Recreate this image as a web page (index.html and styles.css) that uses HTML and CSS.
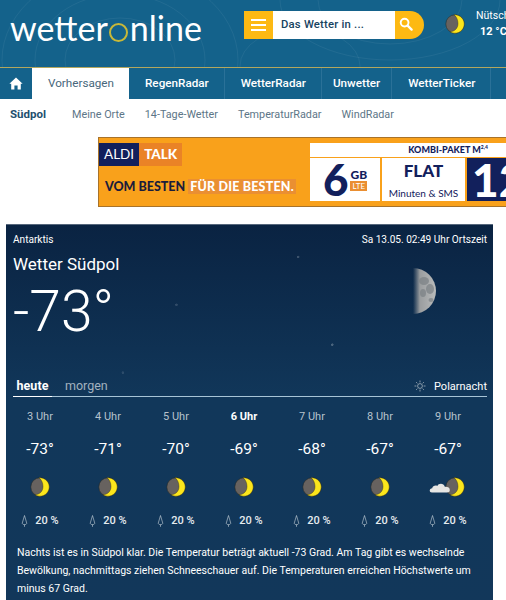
FILE: index.html
```html
<!DOCTYPE html>
<html lang="de">
<head>
    <meta charset="UTF-8">
    <meta name="viewport" content="width=device-width, initial-scale=1.0">
    <title>Wetter Südpol</title>
    <link rel="stylesheet" href="styles.css">
</head>
<body>
    <svg class="icon-defs" width="0" height="0">
        <defs>
            <symbol id="moon" viewBox="0 0 20 20">
                <circle cx="10" cy="10" r="9.2" fill="#67625f" stroke="#2b2a20" stroke-width="0.5"/>
                <path d="M9 .85 A9.2 9.2 0 1 1 5 17.7 C10 17.5 13 14 13 9.5 C13 6 11.5 2.5 9 .85Z" fill="#fce61c" stroke="#3a3510" stroke-width="0.4"/>
            </symbol>
            <symbol id="drop" viewBox="0 0 8 14">
                <path d="M4 .6 L1.4 9.4 C1.2 10.6 2.6 11.2 4 11.2 C5.4 11.2 6.8 10.6 6.6 9.4Z M4 11.2 V13.8" fill="none" stroke="#cfd8df" stroke-width="0.7"/>
            </symbol>
        </defs>
    </svg>

    <header class="top">
        <svg class="contours" viewBox="0 0 506 67" width="506" height="67">
            <g fill="none" stroke="#fff" stroke-opacity="0.06">
                <ellipse cx="120" cy="60" rx="55" ry="42"/>
                <ellipse cx="120" cy="60" rx="85" ry="66"/>
                <ellipse cx="120" cy="60" rx="118" ry="92"/>
                <ellipse cx="300" cy="66" rx="60" ry="38"/>
                <ellipse cx="390" cy="0" rx="72" ry="44"/>
                <ellipse cx="390" cy="0" rx="110" ry="60"/>
            </g>
        </svg>
        <a class="logo">wetter<span class="logo-o"></span>nline</a>
        <div class="search">
            <button class="menu-btn">
                <span></span><span></span><span></span>
            </button>
            <div class="search-input">Das Wetter in ...</div>
            <button class="search-btn">
                <svg width="14" height="14" viewBox="0 0 14 14"><circle cx="5.6" cy="5.6" r="3.9" fill="none" stroke="#fff" stroke-width="1.9"/><path d="M8.6 8.6 L12.6 12.6" stroke="#fff" stroke-width="2.3" stroke-linecap="round"/></svg>
            </button>
        </div>
        <svg class="top-moon" width="20" height="20"><use href="#moon"/></svg>
        <div class="top-place">
            <div>Nütschau</div>
            <div class="top-temp">12 °C</div>
        </div>
    </header>

    <nav class="main-nav">
        <a class="home-tab">
            <svg width="14" height="13" viewBox="0 0 14 13"><path d="M7 .6 L13.6 6.8 L11.8 6.8 L11.8 12.6 L8.6 12.6 L8.6 8.6 L5.4 8.6 L5.4 12.6 L2.2 12.6 L2.2 6.8 L.4 6.8Z" fill="#fff"/></svg>
        </a>
        <a class="tab active">Vorhersagen</a>
        <a class="tab">RegenRadar</a>
        <a class="tab">WetterRadar</a>
        <a class="tab tab-narrow">Unwetter</a>
        <a class="tab">WetterTicker</a>
        <a class="tab">Wetter</a>
    </nav>

    <nav class="sub-nav">
        <a class="current">Südpol</a>
        <a>Meine Orte</a>
        <a>14-Tage-Wetter</a>
        <a>TemperaturRadar</a>
        <a>WindRadar</a>
    </nav>

    <div class="ad">
        <div class="ad-left">
            <div class="ad-logo"><span class="ad-aldi">ALDI</span><span class="ad-talk">TALK</span></div>
            <div class="ad-claim">VOM BESTEN <span>FÜR DIE BESTEN.</span></div>
        </div>
        <div class="ad-right">
            <div class="ad-title">KOMBI-PAKET M<sup>2,4</sup></div>
            <div class="ad-boxes">
                <div class="ad-box ad-gb">
                    <span class="ad-six">6</span>
                    <span class="ad-gb-col"><b>GB</b><i>LTE</i></span>
                </div>
                <div class="ad-box ad-flat">
                    <b>FLAT</b>
                    <span>Minuten &amp; SMS</span>
                </div>
                <div class="ad-box ad-price">12</div>
            </div>
        </div>
    </div>

    <main class="card">
        <svg class="big-moon" width="30" height="48" viewBox="0 0 30 48">
            <defs>
                <linearGradient id="lit" x1="0" x2="1" y1="0" y2="0">
                    <stop offset="0" stop-color="#8d9296" stop-opacity="0"/>
                    <stop offset="0.3" stop-color="#9a9d9f"/>
                    <stop offset="1" stop-color="#b9bbbb"/>
                </linearGradient>
            </defs>
            <path d="M2 1 A23 23 0 0 1 2 47Z" fill="url(#lit)"/>
            <g fill="#7b8084" fill-opacity="0.7">
                <ellipse cx="13" cy="14" rx="5" ry="4"/>
                <ellipse cx="19" cy="22" rx="4" ry="5"/>
                <ellipse cx="12" cy="26" rx="3" ry="4"/>
                <ellipse cx="20" cy="33" rx="2.5" ry="2"/>
            </g>
        </svg>

        <div class="card-top">
            <span>Antarktis</span>
            <span>Sa 13.05. 02:49 Uhr Ortszeit</span>
        </div>
        <h1>Wetter Südpol</h1>
        <div class="now-temp">-73°</div>

        <div class="day-tabs">
            <a class="day active">heute</a>
            <a class="day">morgen</a>
            <span class="polar">
                <svg width="12" height="12" viewBox="0 0 12 12"><circle cx="6" cy="6" r="2.4" fill="none" stroke="#b9c3ca" stroke-width="0.7"/><path d="M6 .5V2.4M6 9.6V11.5M.5 6H2.4M9.6 6H11.5M2.1 2.1L3.4 3.4M8.6 8.6L9.9 9.9M2.1 9.9L3.4 8.6M8.6 3.4L9.9 2.1" stroke="#b9c3ca" stroke-width="0.7"/></svg>
                Polarnacht
            </span>
        </div>

        <div class="hours">
            <div class="hour"><div class="h-time">3 Uhr</div><div class="h-temp">-73°</div><svg class="h-icon" width="20" height="20"><use href="#moon"/></svg><div class="h-rain"><svg width="7" height="12"><use href="#drop"/></svg>20 %</div></div>
            <div class="hour"><div class="h-time">4 Uhr</div><div class="h-temp">-71°</div><svg class="h-icon" width="20" height="20"><use href="#moon"/></svg><div class="h-rain"><svg width="7" height="12"><use href="#drop"/></svg>20 %</div></div>
            <div class="hour"><div class="h-time">5 Uhr</div><div class="h-temp">-70°</div><svg class="h-icon" width="20" height="20"><use href="#moon"/></svg><div class="h-rain"><svg width="7" height="12"><use href="#drop"/></svg>20 %</div></div>
            <div class="hour"><div class="h-time now">6 Uhr</div><div class="h-temp">-69°</div><svg class="h-icon" width="20" height="20"><use href="#moon"/></svg><div class="h-rain"><svg width="7" height="12"><use href="#drop"/></svg>20 %</div></div>
            <div class="hour"><div class="h-time">7 Uhr</div><div class="h-temp">-68°</div><svg class="h-icon" width="20" height="20"><use href="#moon"/></svg><div class="h-rain"><svg width="7" height="12"><use href="#drop"/></svg>20 %</div></div>
            <div class="hour"><div class="h-time">8 Uhr</div><div class="h-temp">-67°</div><svg class="h-icon" width="20" height="20"><use href="#moon"/></svg><div class="h-rain"><svg width="7" height="12"><use href="#drop"/></svg>20 %</div></div>
            <div class="hour">
                <div class="h-time">9 Uhr</div>
                <div class="h-temp">-67°</div>
                <svg class="h-icon" width="36" height="20" viewBox="0 0 36 20">
                    <use href="#moon" x="16" y="0" width="20" height="20"/>
                    <path d="M3 15.5 C0 15.5 0 11.3 3.2 11.2 C3.6 8.6 6.8 8 8.3 9 C9.6 5.8 15 6 15.8 9.8 C18.8 9.6 20.8 10.8 20.8 13 C20.8 14.8 19.6 15.5 18 15.5Z" fill="#e6e6e4"/>
                </svg>
                <div class="h-rain"><svg width="7" height="12"><use href="#drop"/></svg>20 %</div>
            </div>
        </div>

        <p class="summary">Nachts ist es in Südpol klar. Die Temperatur beträgt aktuell -73 Grad. Am Tag gibt es wechselnde Bewölkung, nachmittags ziehen Schneeschauer auf. Die Temperaturen erreichen Höchstwerte um minus 67 Grad.</p>
    </main>
</body>
</html>
```

FILE: styles.css
```css
html, body {
    margin: 0;
    overflow: hidden;
    height: 600px;
}

body {
    background: #fff;
    font-family: Roboto, Arial, sans-serif;
    width: 506px;
}

a {
    text-decoration: none;
}

.icon-defs {
    display: block;
    height: 0;
}

/* Header */
.top {
    position: relative;
    height: 67px;
    background: #14628b;
    display: flex;
    white-space: nowrap;
    overflow: hidden;
    border-bottom: 1px solid #b3a75e;
}

.contours {
    position: absolute;
    left: 0;
    top: 0;
}

.logo {
    position: relative;
    flex: none;
    margin: 5px 0 0 10px;
    width: 234px;
    font-family: Lato, sans-serif;
    font-weight: 400;
    font-size: 34px;
    line-height: 46px;
    color: #fff;
}

.logo-o {
    display: inline-block;
    width: 15px;
    height: 15px;
    margin: 0 1.5px;
    border: 2px solid #c8b838;
    border-radius: 50%;
    vertical-align: -1px;
}

.search {
    position: relative;
    flex: none;
    display: flex;
    margin-top: 11px;
    height: 28px;
    width: 180px;
}

.menu-btn {
    width: 29px;
    background: #fdb913;
    border: none;
    padding: 0 7px;
    display: flex;
    flex-direction: column;
    justify-content: center;
    gap: 3px;
}

.menu-btn span {
    display: block;
    height: 2px;
    background: #fff;
}

.search-input {
    width: 122px;
    background: #fff;
    color: #17435f;
    font-size: 11.3px;
    font-weight: 500;
    line-height: 28px;
    padding-left: 8px;
    box-sizing: border-box;
    letter-spacing: 0.2px;
}

.search-btn {
    width: 29px;
    background: #fdb913;
    border: none;
    border-radius: 0 14px 14px 0;
    padding: 0 0 0 4px;
    text-align: left;
}

.top-moon {
    position: relative;
    flex: none;
    margin: 14px 0 0 21px;
}

.top-place {
    position: relative;
    margin: 8px 0 0 11px;
    color: #fff;
    font-size: 10.5px;
    line-height: 16px;
}

.top-temp {
    margin-left: 4px;
    font-weight: 700;
    font-size: 11px;
}

/* Navigation */
.main-nav {
    display: flex;
    height: 31px;
    background: #14628b;
    white-space: nowrap;
    overflow: hidden;
}

.home-tab {
    width: 32px;
    flex: none;
    display: flex;
    align-items: center;
    justify-content: center;
}

.tab {
    flex: none;
    padding: 0 15px 0 16px;
    color: #fff;
    font-size: 11.7px;
    font-weight: 500;
    line-height: 31px;
    border-right: 1px solid #2a7198;
}

.tab-narrow {
    padding: 0 11px;
}

.tab.active {
    background: #fff;
    color: #48677b;
    font-weight: 400;
    border-right: none;
}

.sub-nav {
    display: flex;
    gap: 20px;
    height: 30px;
    padding-left: 10px;
    align-items: center;
    font-size: 10.8px;
    color: #5d7687;
    white-space: nowrap;
}

.sub-nav .current {
    margin-right: 6px;
    color: #1e4f6e;
    font-weight: 700;
    font-size: 11.5px;
}

/* Werbung */
.ad {
    display: flex;
    margin: 8px 0 0 98px;
    height: 70px;
    width: 500px;
    box-sizing: border-box;
    background: #f9a11b;
    border: 1px solid #a8732a;
    overflow: hidden;
    font-family: Lato, sans-serif;
}

.ad-left {
    width: 211px;
    flex: none;
    padding-top: 5px;
}

.ad-logo {
    display: flex;
    height: 23px;
    line-height: 23px;
    color: #fff;
    font-size: 13.5px;
}

.ad-aldi {
    background: #12205c;
    padding: 0 5px;
    font-family: "Liberation Sans Narrow", Lato, sans-serif;
}

.ad-talk {
    background: #ea8326;
    padding: 0 5px;
    font-weight: 900;
}

.ad-claim {
    margin: 13px 0 0 6px;
    color: #1b1c3b;
    font-weight: 900;
    font-size: 12.5px;
    line-height: 15px;
}

.ad-claim span {
    background: #ea8f32;
    color: #fff;
    padding: 0 2px;
    letter-spacing: 0.2px;
}

.ad-right {
    flex: 1;
    padding-top: 5px;
}

.ad-title {
    background: #fff;
    height: 14px;
    line-height: 14px;
    text-align: center;
    font-size: 9px;
    font-weight: 900;
    color: #12205c;
    margin-bottom: 1px;
    width: 276px;
}

.ad-title sup {
    font-size: 5px;
    line-height: 0;
}

.ad-boxes {
    display: flex;
    gap: 2px;
    height: 43px;
}

.ad-box {
    background: #fff;
    color: #12205c;
}

.ad-gb {
    width: 70px;
    display: flex;
    justify-content: center;
    align-items: center;
    gap: 2px;
}

.ad-six {
    font-size: 44px;
    font-weight: 900;
    line-height: 43px;
}

.ad-gb-col {
    display: flex;
    flex-direction: column;
    font-size: 12px;
    line-height: 13px;
    font-weight: 900;
}

.ad-gb-col i {
    background: #ea8f32;
    color: #fff;
    font-style: normal;
    font-size: 8px;
    font-weight: 400;
    line-height: 10px;
    text-align: center;
}

.ad-flat {
    width: 83px;
    text-align: center;
    padding-top: 3px;
    box-sizing: border-box;
}

.ad-flat b {
    display: block;
    font-size: 17px;
    font-weight: 900;
    line-height: 20px;
}

.ad-flat span {
    font-size: 10px;
    line-height: 12px;
}

.ad-price {
    width: 50px;
    background: #12205c;
    color: #fff;
    font-size: 46px;
    font-weight: 900;
    line-height: 43px;
    padding-left: 5px;
}

/* Wetterkarte */
.card {
    position: relative;
    margin: 17px 0 0 6px;
    width: 487px;
    height: 400px;
    box-sizing: border-box;
    padding: 8px 6px 0 7px;
    color: #fff;
    border-top: 1px solid #56677c;
    background-color: #12365a;
    background-image:
        radial-gradient(circle at 60% 8%, rgba(255,255,255,.2) 0 1px, transparent 1.5px),
        radial-gradient(circle at 35% 20%, rgba(255,255,255,.15) 0 1px, transparent 1.5px),
        radial-gradient(circle at 67% 30%, rgba(255,255,255,.25) 0 1px, transparent 1.5px),
        radial-gradient(circle at 24% 37%, rgba(255,255,255,.12) 0 1px, transparent 1.5px),
        linear-gradient(180deg, #0a2342 0, #11375a 175px, #12375a 100%);
}

.big-moon {
    position: absolute;
    left: 405px;
    top: 42px;
}

.card-top {
    display: flex;
    justify-content: space-between;
    font-size: 10.1px;
    line-height: 13px;
}

h1 {
    margin: 6px 0 0;
    font-size: 17px;
    font-weight: 400;
    line-height: 24px;
}

.now-temp {
    margin-top: 5px;
    font-size: 57px;
    font-weight: 300;
    line-height: 62px;
}

.day-tabs {
    display: flex;
    align-items: flex-end;
    gap: 13px;
    margin-top: 26px;
    height: 27px;
    border-bottom: 1px solid #a7c4d6;
    font-size: 12.5px;
}

.day {
    display: block;
    color: #a3b2bf;
    line-height: 20px;
    height: 20px;
}

.day.active {
    color: #fff;
    font-weight: 700;
    width: 39px;
    text-align: center;
    border-bottom: 1px solid #fff;
    margin-bottom: -1px;
    letter-spacing: 0.1px;
}

.polar {
    margin-left: auto;
    display: flex;
    align-items: center;
    gap: 8px;
    height: 20px;
    font-size: 11px;
    color: #fff;
}

.hours {
    display: grid;
    grid-template-columns: repeat(7, 68px);
    margin-left: -7px;
}

.hour {
    display: flex;
    flex-direction: column;
    align-items: center;
}

.h-time {
    margin-top: 12px;
    font-size: 11px;
    line-height: 16px;
    color: #b6c2cc;
}

.h-time.now {
    color: #fff;
    font-weight: 700;
}

.h-temp {
    margin-top: 13px;
    font-size: 15.5px;
    line-height: 22px;
}

.h-icon {
    margin-top: 17px;
    display: block;
}

.hour:last-child .h-icon {
    margin-left: -2px;
}

.h-rain {
    display: flex;
    align-items: center;
    gap: 7px;
    margin-top: 16px;
    font-size: 11px;
    font-weight: 500;
    line-height: 16px;
    color: #e6ebef;
}

.summary {
    margin: 15px 0 0 4px;
    width: 456px;
    font-size: 10.5px;
    line-height: 18px;
}
```
